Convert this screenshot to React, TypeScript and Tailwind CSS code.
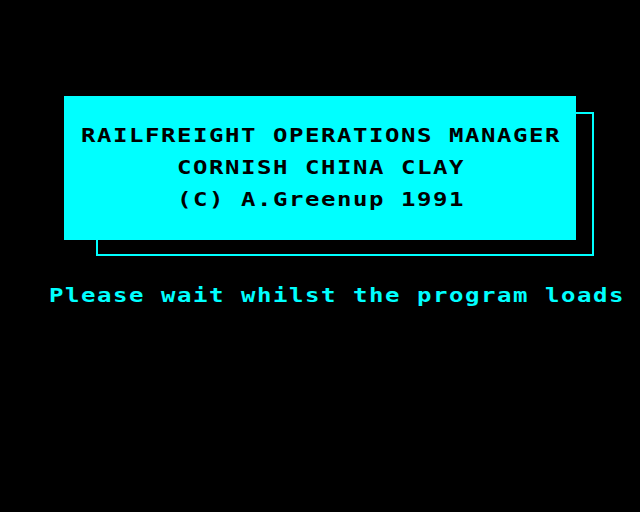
import React from 'react';

// BBC-style wide glyphs: 13.33px advance scaled x1.2 gives a 16px character cell
const font = "font-['DejaVu_Sans_Mono',monospace] font-bold text-[20px] leading-[32px] tracking-[1.29px] whitespace-pre scale-x-[1.2]";

const App: React.FC = () => {
  return (
    <div className="w-[640px] h-[512px] bg-black overflow-hidden flex flex-col">
      {/* Title box with offset outline */}
      <div className="relative ml-[64px] mt-[96px] w-[512px] h-[144px]">
        <div className="absolute left-[32px] top-[16px] w-[498px] h-[144px] border-2 border-[#00ffff]" />
        <div className="relative w-[512px] h-[144px] bg-[#00ffff] text-black pt-[23px] flex flex-col items-center">
          <div className={`pl-[1px] ${font}`}>RAILFREIGHT OPERATIONS MANAGER</div>
          <div className={`pl-[1px] ${font}`}>CORNISH CHINA CLAY</div>
          <div className={`pl-[1px] ${font}`}>(C) A.Greenup 1991</div>
        </div>
      </div>

      <div className={`ml-[49px] mt-[39px] self-start origin-left text-[#00ffff] ${font}`}>
        Please wait whilst the program loads
      </div>
    </div>
  );
};

export default App;
